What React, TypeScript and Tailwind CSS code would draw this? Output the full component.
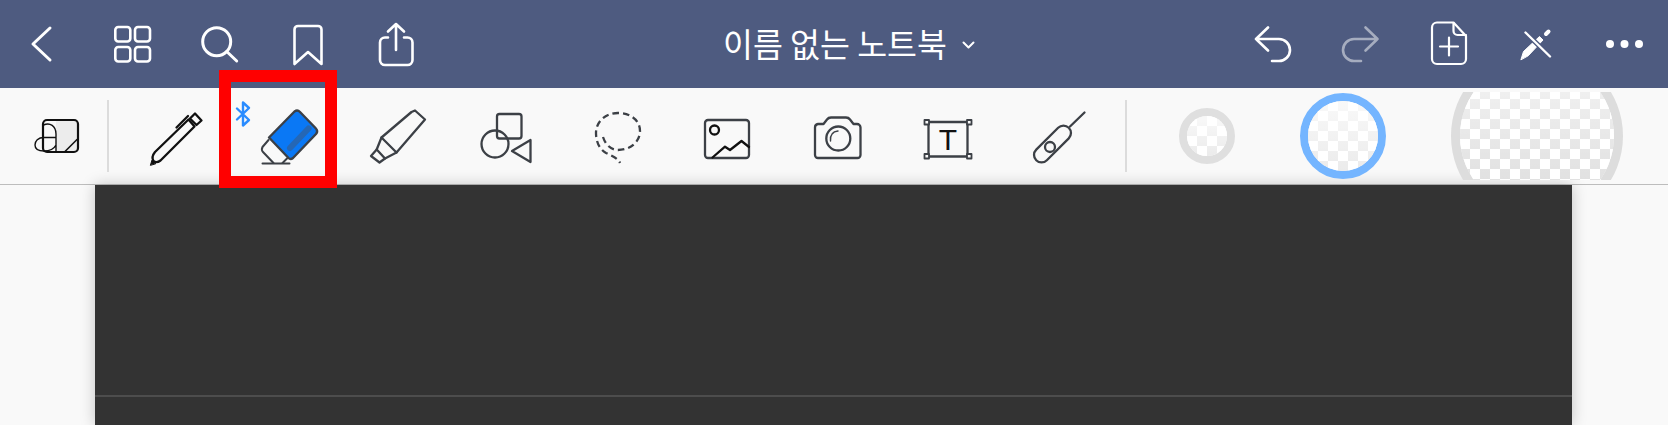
import { ReactNode } from 'react'

const INK = '#3c4046'

function HeaderIcon({ x, w = 88, children }: { x: number; w?: number; children: ReactNode }) {
  return (
    <svg
      width={w}
      height={88}
      viewBox={`${x} 0 ${w} 88`}
      fill="none"
      stroke="#fff"
      strokeWidth={2.6}
      strokeLinecap="round"
      strokeLinejoin="round"
      className="shrink-0"
    >
      {children}
    </svg>
  )
}

function Tool({ x, children }: { x: number; children: ReactNode }) {
  return (
    <svg
      width={110}
      height={72}
      viewBox={`${x} 100 110 72`}
      fill="none"
      stroke={INK}
      strokeWidth={2.3}
      strokeLinecap="round"
      strokeLinejoin="round"
      className="shrink-0"
    >
      {children}
    </svg>
  )
}

function Checker({ size, ring, color, clip }: { size: string; ring: string; color: string; clip?: boolean }) {
  return (
    <div className={clip ? 'flex h-[88px] w-[172px] shrink-0 items-center justify-center overflow-hidden' : 'shrink-0'}>
      <div className={`${size} ${ring} ${color} relative shrink-0 overflow-hidden rounded-full`}>
        {clip ? (
          <div className="h-full w-full bg-[repeating-conic-gradient(#dcdcdc_0_25%,#ffffff_0_50%)] bg-[length:20px_20px]" />
        ) : (
          <div className="h-full w-full bg-[repeating-conic-gradient(#ebebeb_0_25%,#ffffff_0_50%)] bg-[length:20px_20px]" />
        )}
        <div className="absolute inset-0 bg-gradient-to-b from-white/70 to-white/0" />
      </div>
    </div>
  )
}

export default function App() {
  return (
    <div className="relative h-[425px] w-[1668px] overflow-hidden bg-[#f9f9f9] font-['Noto_Sans_CJK_KR',sans-serif]">
      {/* top bar */}
      <header className="flex h-[88px] items-center bg-[#4e5b80]">
        <HeaderIcon x={0} w={86}>
          <path d="M50 28 L33 44 L50 60" strokeWidth={3} />
        </HeaderIcon>
        <HeaderIcon x={86} w={90}>
          <rect x="115.3" y="27" width="15" height="14.5" rx="3" />
          <rect x="135" y="27" width="15" height="14.5" rx="3" />
          <rect x="115.3" y="47" width="15" height="14.5" rx="3" />
          <rect x="135" y="47" width="15" height="14.5" rx="3" />
        </HeaderIcon>
        <HeaderIcon x={176}>
          <circle cx="216.7" cy="41.7" r="14" strokeWidth={3} />
          <path d="M226.7 51.5 L236.7 61" strokeWidth={3} />
        </HeaderIcon>
        <HeaderIcon x={264}>
          <path d="M294.5 64 V29.5 a3.5 3.5 0 0 1 3.5 -3.5 H318 a3.5 3.5 0 0 1 3.5 3.5 V64 L308 52 Z" />
        </HeaderIcon>
        <HeaderIcon x={352}>
          <path d="M388 37.5 H385 a5 5 0 0 0 -5 5 V60 a5 5 0 0 0 5 5 H407.5 a5 5 0 0 0 5 -5 V42.5 a5 5 0 0 0 -5 -5 H404" />
          <path d="M396 50 V24 M388 31.5 L396 24 L404 31.5" />
        </HeaderIcon>

        <div className="ml-[283px] flex items-center">
          <span className="-mt-[2px] text-[32.5px] leading-none whitespace-nowrap text-white">이름 없는 노트북</span>
          <svg width="13" height="8" viewBox="0 0 13 8" fill="none" stroke="#fff" strokeWidth={2} strokeLinecap="round" strokeLinejoin="round" className="mt-[2px] ml-[15px]">
            <path d="M1.5 1.5 L6.5 6.5 L11.5 1.5" />
          </svg>
        </div>

        <div className="ml-auto flex">
          <HeaderIcon x={1228}>
            <path d="M1256 39 H1279 a11 11 0 0 1 0 22 H1272 M1268 27.5 L1256 39 L1268 50.5" />
          </HeaderIcon>
          <HeaderIcon x={1316}>
            <path d="M1377.5 39 H1354 a11 11 0 0 0 0 22 H1361 M1365.5 27.5 L1377.5 39 L1365.5 50.5" stroke="#a6adbf" />
          </HeaderIcon>
          <HeaderIcon x={1404}>
            <path d="M1453.5 22.5 H1437 a5 5 0 0 0 -5 5 V59 a5 5 0 0 0 5 5 H1461 a5 5 0 0 0 5 -5 V36 Z" strokeWidth={2.2} />
            <path d="M1453.5 23 V31 a4 4 0 0 0 4 4 H1466" strokeWidth={2.2} />
            <path d="M1449 37.5 V55.5 M1440 46.5 H1458" strokeWidth={2.2} />
          </HeaderIcon>
          <HeaderIcon x={1492}>
            <path d="M1521 59.5 L1523.5 51.5 L1539.5 36.5 L1543 40 L1528.5 55.5 Z" fill="#fff" strokeWidth={1} />
            <path d="M1546 34 L1548.5 31.5" strokeWidth={4} />
            <path d="M1525.5 32.5 L1550 56.5" stroke="#4e5b80" strokeWidth={5} />
            <path d="M1525.5 32.5 L1550 56.5" strokeWidth={2.4} />
          </HeaderIcon>
          <HeaderIcon x={1580}>
            <g fill="#fff" stroke="none">
              <circle cx="1610" cy="44" r="4" />
              <circle cx="1624.5" cy="44" r="4" />
              <circle cx="1639" cy="44" r="4" />
            </g>
          </HeaderIcon>
        </div>
      </header>

      {/* tool strip */}
      <div className="flex h-[97px] items-center border-b border-[#bdbdbd] bg-[#f9f9f9]">
        <svg width={107} height={72} viewBox="0 100 107 72" fill="none" strokeLinecap="round" strokeLinejoin="round" className="shrink-0">
          <path d="M56 120 H75 a3 3 0 0 1 3 3 V149 a3 3 0 0 1 -3 3 H56 Z" fill="#ececec" />
          <rect x="43" y="120" width="35" height="32" rx="4" stroke="#111" strokeWidth={2.2} />
          <path d="M65 151.5 L77 139.5" stroke="#111" strokeWidth={1.6} />
          <path d="M43.5 125 C50 122 56 126 56 134 V152 M56 137.5 H44 C38 137.5 35 141 35 145 C35 150 39 151 44 151 C50 151 54 149 56 145" stroke="#111" strokeWidth={1.4} />
        </svg>
        <div className="h-[72px] w-[2px] shrink-0 bg-[#dcdcdc]" />

        <div className="ml-[12px] flex">
          <Tool x={121}>
            <g stroke="#111">
              <path d="M155 152 L188.5 119.5 L194.5 126.5 L160.5 160.5 Q156.5 163.5 153.5 161 Q151 157 155 152 Z" />
              <path d="M195 113.5 L201.5 120.5 L196.5 125 L190 118.5 Z" />
              <path d="M176.5 127.5 L188 116" />
            </g>
            <path d="M150.5 165 L152 160 L155.5 163.5 Z" fill="#111" stroke="#111" strokeWidth={1} />
          </Tool>
          <Tool x={231}>
            <path d="M237 108.5 L249 120 L243 125.5 V102.5 L249 108 L237 119.5" stroke="#2a8cff" strokeWidth={2.4} />
            <path d="M294.5 111.5 Q297.5 109.5 300 112 L315.5 128 Q318.5 131 316 134 L293 158 Q290.5 160 288.5 158 L269 137.5 L294.5 111.5 Z" fill="#0a78f5" strokeWidth={2.4} />
            <path d="M308.5 128.5 L290 148" stroke="#2567b5" strokeWidth={6} />
            <path d="M268.5 140 L262.5 147 Q261 150 263 152 L273.5 163 M282.5 163 L287 158.5" strokeWidth={2} />
            <path d="M262.5 163.5 H289.5" strokeWidth={2} />
          </Tool>
          <Tool x={341}>
            <path d="M415 110.5 L425 119.5 L396.5 152.5 L381.5 137.5 L411.5 112 Z" />
            <path d="M381.5 137.5 L376.7 149.5 L385 158.5 L396.5 152.5" />
            <path d="M376.7 149.5 L371 156 L379.5 162.5 L385 158.5" />
          </Tool>
          <Tool x={451}>
            <rect x="497" y="114" width="24.5" height="24.5" rx="2.5" />
            <circle cx="495" cy="144" r="13.5" />
            <path d="M530.5 140 V162 L512 151 Z" />
          </Tool>
          <Tool x={561}>
            <path d="M603 137 C606 146 612 150 618 150 C630 150 640 142 640 131 C640 120 630 113 618 113 C606 113 596 121 596 133 C596 141 599 149 606 153 C612 156 618 158 620 163" strokeDasharray="6.5 4" strokeLinecap="butt" />
          </Tool>
          <Tool x={671}>
            <rect x="705" y="120" width="44" height="38" rx="3" />
            <circle cx="714.5" cy="130" r="4.5" stroke="#111" />
            <path d="M712.5 157.5 L725 146.7 L730 150 L741.5 141 L749 147" stroke="#111" />
          </Tool>
          <Tool x={781}>
            <path d="M818 124 H823.5 L827 119.5 Q828.5 117.5 831 117.5 H846 Q848.5 117.5 850 119.5 L853.5 124 H857 a3.5 3.5 0 0 1 3.5 3.5 V155 a3 3 0 0 1 -3 3 H818 a3 3 0 0 1 -3 -3 V127.5 a3.5 3.5 0 0 1 3 -3.5 Z" />
            <circle cx="838.3" cy="138.5" r="12" />
            <path d="M830.5 141 C830 135 833 131.5 838 131" strokeWidth={1.4} />
          </Tool>
          <Tool x={891}>
            <rect x="928.5" y="122" width="39" height="34.5" />
            <g fill="#f9f9f9" strokeWidth={1.8}>
              <rect x="924.5" y="120" width="4.5" height="4.5" />
              <rect x="967" y="120" width="4.5" height="4.5" />
              <rect x="924.5" y="154" width="4.5" height="4.5" />
              <rect x="967" y="154" width="4.5" height="4.5" />
            </g>
            <text x="948" y="150" textAnchor="middle" fill="#111" stroke="none" className="font-['Liberation_Sans',sans-serif] text-[30px]">T</text>
          </Tool>
          <Tool x={1001}>
            <rect x="1029.5" y="136.5" width="46" height="15" rx="7.5" transform="rotate(-45 1052.5 144)" />
            <circle cx="1050" cy="147" r="5" />
            <path d="M1070 126.5 L1084.5 112.5" />
          </Tool>
        </div>

        <div className="ml-[14px] h-[72px] w-[2px] shrink-0 bg-[#dcdcdc]" />

        <div className="ml-[52px] flex items-center gap-[65px]">
          <Checker size="h-[56px] w-[56px]" ring="border-[8px]" color="border-[#dfdfdf]" />
          <Checker size="h-[86px] w-[86px]" ring="border-[8px]" color="border-[#74b5ff]" />
          <Checker size="h-[172px] w-[172px]" ring="border-[9px]" color="border-[#dddddd]" clip />
        </div>
      </div>

      {/* note page */}
      <main className="mx-[95px] h-[240px] w-[1477px] bg-[#333333] pt-[210px] shadow-[0_0_14px_rgba(0,0,0,0.22)]">
        <div className="h-[2px] bg-[#4d4d4d]" />
      </main>

      {/* highlight around the eraser */}
      <div className="absolute top-[70px] left-[219px] h-[118px] w-[118px] border-[12px] border-[#ff0000]" />
    </div>
  )
}
